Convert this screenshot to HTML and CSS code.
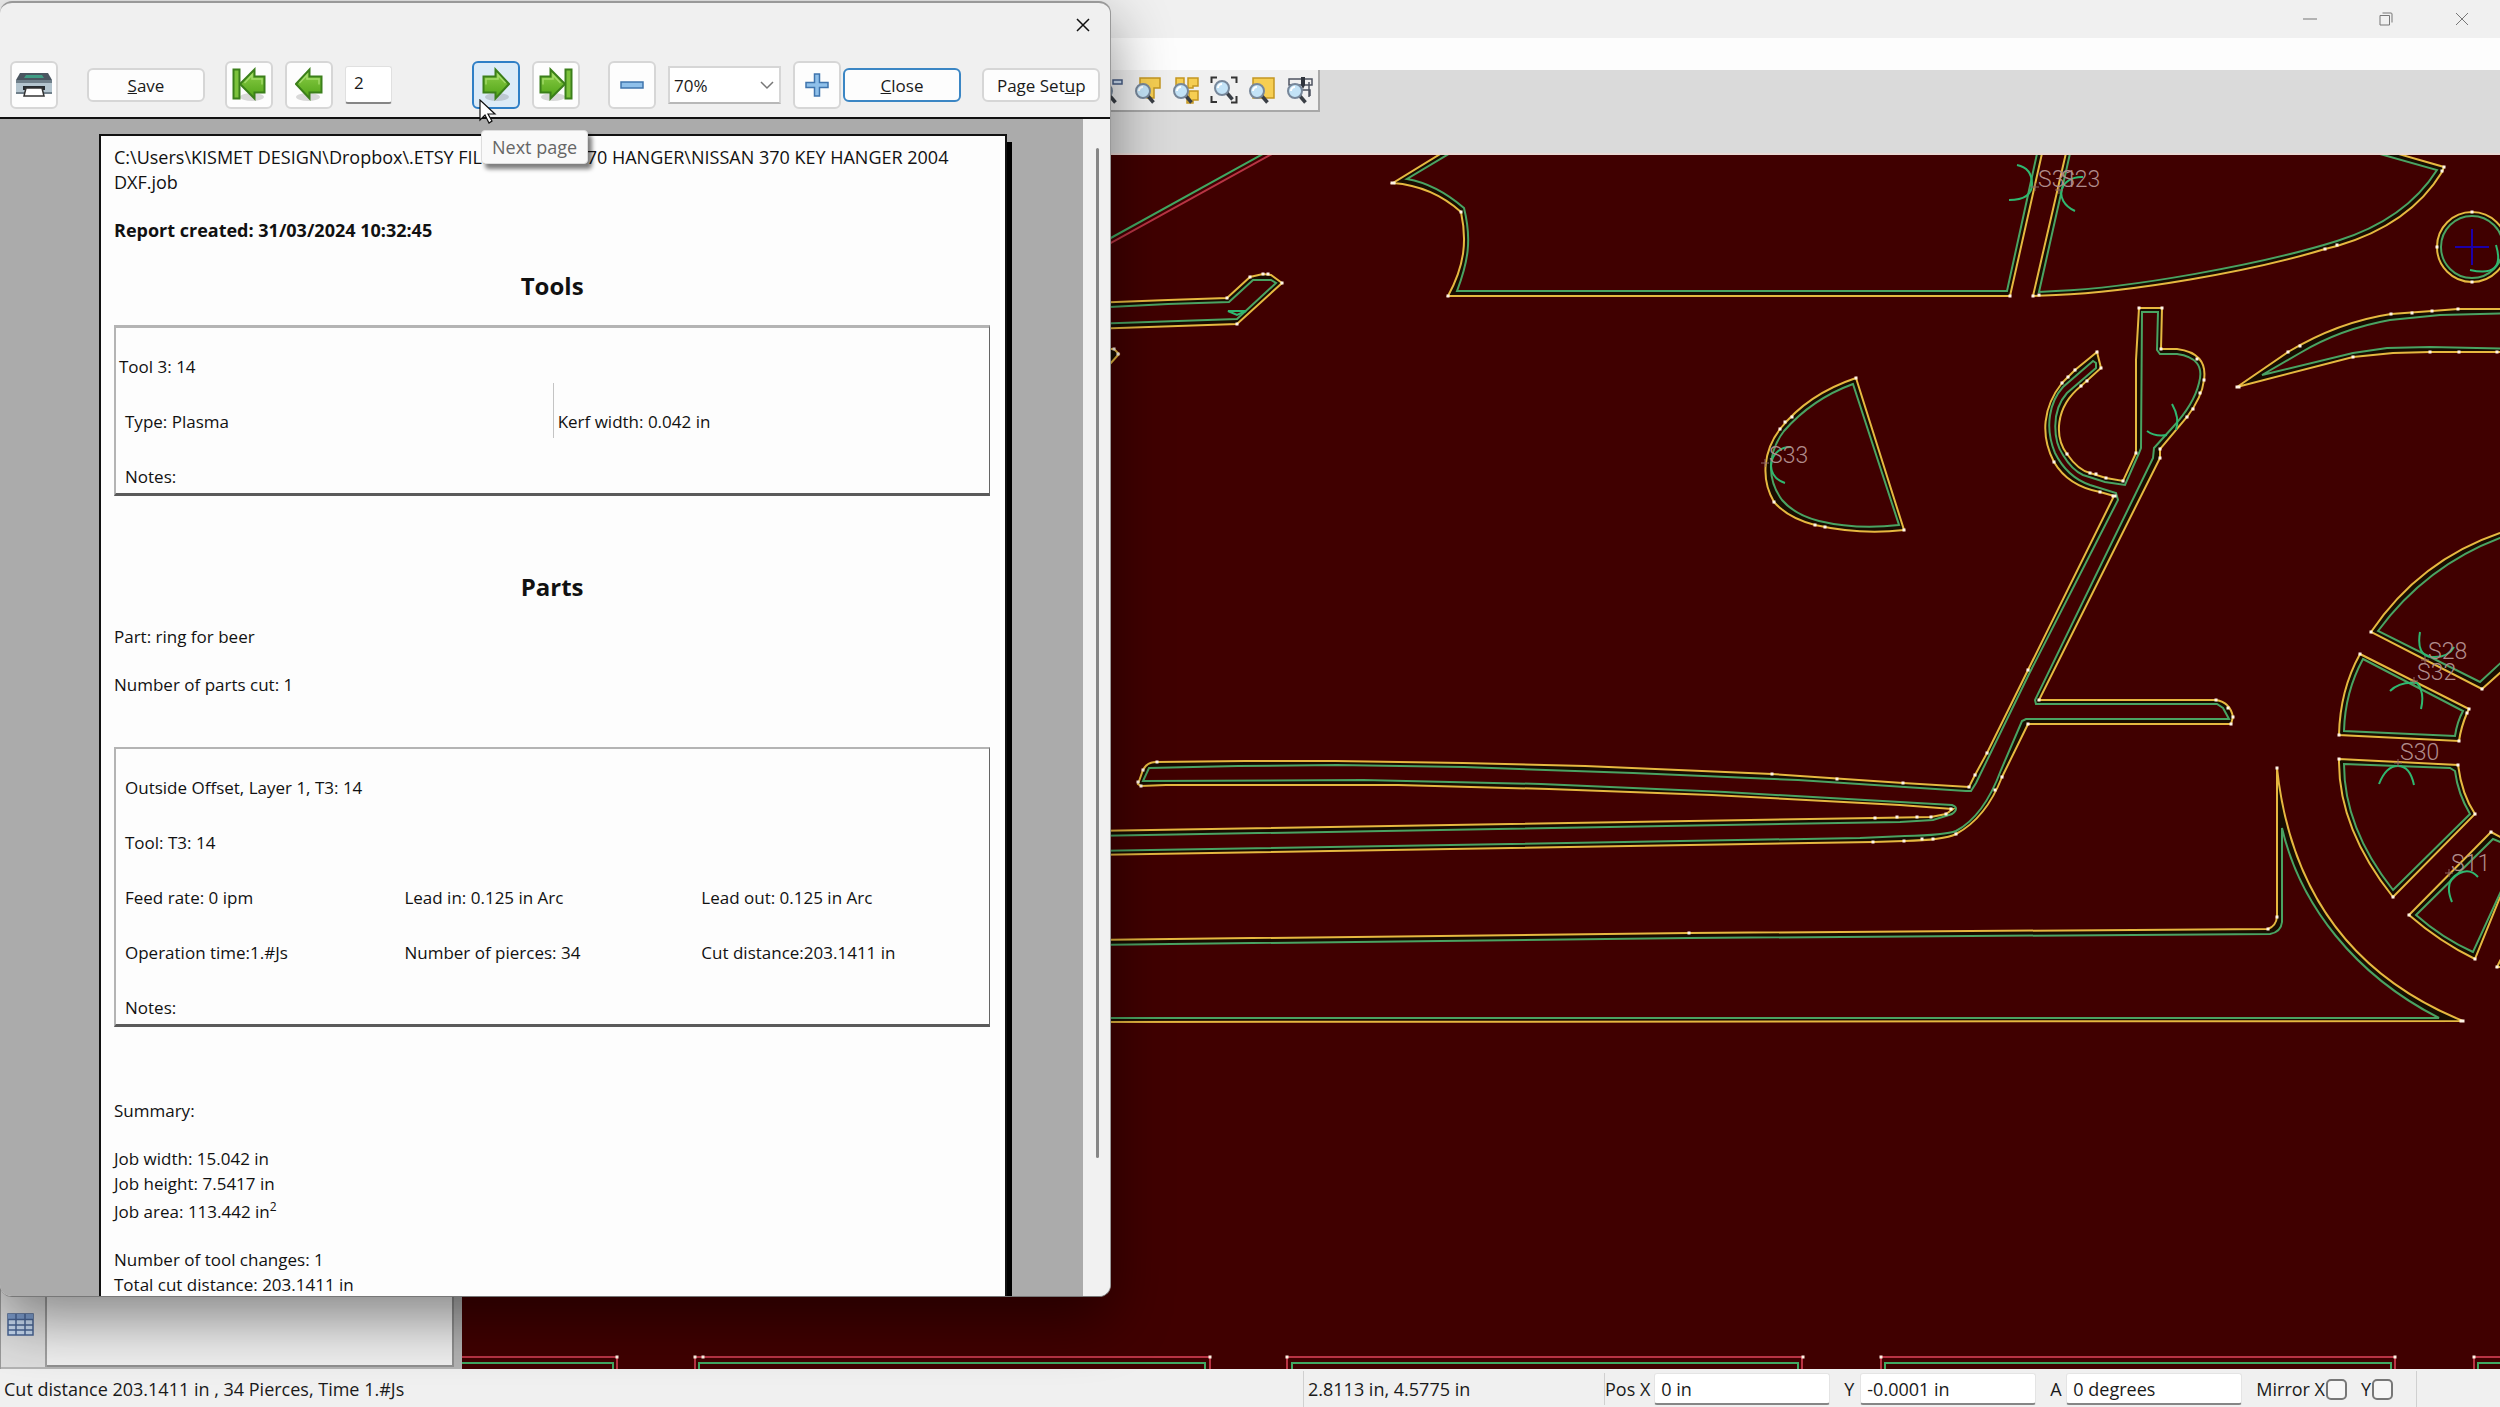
FILE: index.html
```html
<!DOCTYPE html>
<html lang="en">

<head>
    <meta charset="UTF-8">
    <title>Job report</title>
    <link rel="stylesheet" href="styles.css">
</head>

<body>

<!-- shared icon shapes -->
<svg class="defs" width="0" height="0" aria-hidden="true">
    <defs>
        <linearGradient id="green" x1="0" y1="0" x2="0" y2="1">
            <stop offset="0" stop-color="#8fd04a"/>
            <stop offset="1" stop-color="#4fa316"/>
        </linearGradient>
        <symbol id="arrow" viewBox="0 0 28 36">
            <ellipse cx="15" cy="30" rx="12" ry="4" fill="#000" opacity=".14"/>
            <path d="M1.500 9.500H13.500V2.500L27 17 13.500 31.500V25.500H1.500z" fill="url(#green)" stroke="#3b7f1a" stroke-width="2"/>
            <path d="M4 17.500V12H16V8l7.500 8" fill="none" stroke="#b4e57c" stroke-width="1.500" opacity=".7"/>
        </symbol>
        <symbol id="arrow-end" viewBox="0 0 34 36">
            <ellipse cx="14" cy="30" rx="12" ry="4" fill="#000" opacity=".14"/>
            <path d="M1.500 9.500H11.500V2.500L26 17 11.500 31.500V25.500H1.500z" fill="url(#green)" stroke="#3b7f1a" stroke-width="2"/>
            <path d="M26.500 2.500h6v29h-6z" fill="#7cc23c" stroke="#3b7f1a" stroke-width="2"/>
            <path d="M4 17.500V12H14V8l7.500 8" fill="none" stroke="#b4e57c" stroke-width="1.500" opacity=".7"/>
        </symbol>
        <symbol id="lens" viewBox="0 0 28 28">
            <path d="M13.500 19.500l6 7" stroke="#3a3f46" stroke-width="3.500"/>
            <circle cx="9" cy="15" r="7" fill="#c3e3f7" stroke="#77879a" stroke-width="2"/>
            <path d="M5 15a4 4 0 0 1 4-4" fill="none" stroke="#fff" stroke-width="2"/>
        </symbol>
    </defs>
</svg>

<div class="app">
    <header class="titlebar">
        <button class="win-btn" aria-label="Minimize"><svg width="14" height="14" viewBox="0 0 14 14"><path d="M0 7h14"/></svg></button>
        <button class="win-btn" aria-label="Restore"><svg width="14" height="14" viewBox="0 0 14 14"><path d="M1 3.500h9.500v9.500H1zM3.500 1H12q1 0 1 1v8.500"/></svg></button>
        <button class="win-btn" aria-label="Close window"><svg width="14" height="14" viewBox="0 0 14 14"><path d="M1 1l12 12M13 1L1 13"/></svg></button>
    </header>
    <div class="menubar"></div>

    <div class="toolbar-area">
        <div class="view-tools">
            <button class="view-btn" aria-label="Zoom out"><svg width="28" height="28"><use href="#lens" width="28" height="28"/><path d="M17 4h9v4h-9z" fill="#cfe0f5" stroke="#4a5f86" stroke-width="1.500"/></svg></button>
            <button class="view-btn" aria-label="Zoom part"><svg width="28" height="28"><path d="M6 2h20v10h-6v10h-7V12H6z" fill="#f6ce52" stroke="#c39722" stroke-width="1.500"/><use href="#lens" width="28" height="28"/></svg></button>
            <button class="view-btn" aria-label="Zoom all parts"><svg width="28" height="28"><path d="M4 2h8v9H4zM16 2h10v8h-5v2h-5zM17 15h9v9h-5v3h-6v-6h2z" fill="#f6ce52" stroke="#c39722" stroke-width="1.500"/><use href="#lens" width="28" height="28"/></svg></button>
            <button class="view-btn" aria-label="Zoom extents"><svg width="28" height="28"><path d="M1.500 7V1.500H7M21 1.500h5.500V7M1.500 20v6H7M21 26.500h5.500V20" fill="none" stroke="#333" stroke-width="2"/><use href="#lens" x="3" y="-3" width="28" height="28"/></svg></button>
            <button class="view-btn" aria-label="Zoom material"><svg width="28" height="28"><path d="M5 2h21v20H5z" fill="#f6ce52" stroke="#c39722" stroke-width="1.500"/><use href="#lens" width="28" height="28"/></svg></button>
            <button class="view-btn" aria-label="Zoom machine"><svg width="28" height="28"><path d="M3 3h23v6H3zM6 9v13M23 6v15M10 14h14v6" fill="none" stroke="#4d5360" stroke-width="1.500"/><path d="M15 1h4v8l-2 4-2-4z" fill="#30343c"/><use href="#lens" width="28" height="28"/></svg></button>
        </div>
    </div>

    <main class="workspace">
        <aside class="side">
            <div class="side-tabs">
                <svg class="grid-icon" width="27" height="23" viewBox="0 0 27 23">
                    <path d="M1 1h25v21H1z" fill="#c9dcf3" stroke="#4a6595" stroke-width="1.500"/>
                    <path d="M1 1h25v5H1z" fill="#7f9fd0"/>
                    <path d="M1 6.500h25M1 12h25M1 17h25M9 1v21M18 1v21" stroke="#4a6595" stroke-width="1.500"/>
                </svg>
            </div>
            <div class="side-panel"></div>
        </aside>

        <section class="canvas">
            <svg class="drawing" viewBox="462 155 2038 1214" preserveAspectRatio="xMinYMin slice">
                <!-- sheet outline -->
                <path class="red" d="M1080 260L1290 144"/>
                <path class="green" d="M1080 255L1281 144"/>

                <!-- small arm -->
                <path class="part" d="M1090 303L1168 300 1227 298 1250 277 1263 274 1271 275 1282 283 1237 324 1090 329z"/>
                <path class="path" d="M1090 308L1168 304 1229 302 1253 280 1271 280 1276 283 1237 319 1090 324z"/>
                <path class="lead" d="M1228 311h18l-9 4z"/>
                <path class="part" d="M1090 349h24l5 5-9 10h-20z"/>

                <!-- window panels -->
                <path class="part" d="M1463 140L1393 183Q1432 186 1461 212C1467 240 1465 265 1448 296H2010L2045 140z"/>
                <path class="path" d="M1472 140L1407 179Q1436 184 1464 208C1472 240 1468 262 1457 291H2007L2040 140z"/>
                <path class="part" d="M2069 140L2033 296 2056 295C2130 292 2250 272 2325 249L2337 246C2385 232 2420 208 2442 172L2444 167 2350 140z"/>
                <path class="path" d="M2073 140L2039 292 2056 291C2130 288 2260 265 2337 241C2385 226 2418 200 2437 170L2330 140z"/>
                <path class="lead" d="M2017 165Q2032 168 2032 184T2009 200M2083 177C2060 176 2052 200 2075 211"/>

                <!-- headrest -->
                <path class="part" d="M1856 378L1904 530Q1860 535 1815 525 1788 518 1774 502C1760 478 1764 450 1780 429Q1808 394 1856 378z"/>
                <path class="path" d="M1853 384L1899 525Q1857 530 1819 521 1795 515 1782 500C1766 478 1768 452 1784 431Q1812 399 1853 384z"/>
                <path class="lead" d="M1791 447C1770 446 1762 476 1785 483"/>

                <!-- long rail, rod and hook -->
                <path class="part" d="M1090 831L1874 818 1931 817 1946 814 1953 809 1900 805 1712 795 1549 789 1398 785 1166 785 1141 786 1138 784 1143 770Q1147 762 1156 762L1245 761 1335 761 1463 763 1585 766 1772 774 1903 783 1969 787 1975 775 1987 753 2028 670 2114 496 2100 492Q2068 486 2054 462C2040 435 2043 407 2062 383L2075 370 2097 352 2101 368 2081 386C2054 408 2055 438 2067 454Q2078 470 2090 473L2106 478 2123 481 2136 453 2136 360 2139 308H2162L2161 349H2177Q2208 353 2204 380 2202 397 2187 417L2160 449V458L2039 700H2216Q2230 702 2233 717L2231 724H2028L2002 777Q1986 818 1956 834 1944 840 1904 841L1873 842 1090 855z"/>
                <path class="path" d="M1090 836L1900 822 1933 820 1952 814Q1960 808 1952 805L1900 802 1725 792 1541 784 1363 780 1143 781 1149 768 1238 766 1337 765 1464 767 1633 773 1798 780 1966 791H1971L1976 783 2029 674 2118 500 2116 493 2090 485Q2067 477 2055 453C2044 427 2050 401 2063 387L2093 361 2096 363V368L2067 393C2050 412 2054 442 2063 455Q2072 470 2083 475L2105 482 2125 485 2139 453 2141 448 2142 312H2158L2157 350 2160 354H2177Q2206 358 2199 383 2194 404 2173 427L2154 448 2153 458 2035 700 2036 704H2217L2223 708 2229 719H2026L2022 721 2001 770Q1984 816 1956 831 1946 835 1905 836L1860 838 1090 851z"/>
                <path class="lead" d="M2172 404Q2180 418 2176 430M2147 431Q2155 437 2167 435"/>

                <!-- spoiler -->
                <path class="part" d="M2237 387L2288 352Q2338 322 2391 314L2432 311 2458 309H2520V352H2430L2393 353 2353 357z"/>
                <path class="path" d="M2262 375L2300 353Q2340 329 2390 320L2440 315 2520 313V349L2430 347 2387 348 2353 353z"/>
                <circle class="part" cx="2472" cy="247" r="35"/>
                <circle class="path" cx="2472" cy="247" r="31"/>
                <path class="blue" d="M2455 247h34M2472 229v36"/>
                <path class="lead" d="M2496 245Q2506 278 2470 270"/>

                <!-- body -->
                <path class="part" d="M1090 940L1689 933 2268 929Q2276 926 2277 917V768C2290 890 2350 975 2463 1021L1090 1022z"/>
                <path class="path" d="M1090 945L1689 938 2270 934Q2281 932 2282 922V828C2300 905 2355 975 2439 1018H1090z"/>

                <!-- wheel -->
                <path class="part" d="M2520 525L2500 533Q2420 560 2371 632L2482 689 2520 655z"/>
                <path class="path" d="M2520 531L2500 538Q2426 566 2378 631L2480 682 2520 645z"/>
                <path class="part" d="M2360 654L2469 709 2467 713Q2461 727 2459 741L2339 735Q2340 690 2360 654z"/>
                <path class="path" d="M2363 659L2463 711Q2457 722 2455 736L2344 731Q2345 692 2363 659z"/>
                <path class="part" d="M2339 759L2458 765Q2462 795 2475 814L2393 897Q2338 828 2339 759z"/>
                <path class="path" d="M2344 764L2450 768 2455 771Q2458 794 2470 814L2393 890Q2344 828 2344 764z"/>
                <path class="part" d="M2491 832L2520 848 2475 959Q2440 942 2409 915z"/>
                <path class="path" d="M2493 839L2520 850 2473 952Q2442 938 2416 915z"/>
                <path class="part" d="M2497 967l10-20v20z"/>
                <path class="lead" d="M2420 632Q2416 656 2432 657T2454 647M2390 691Q2400 681 2417 683 2425 692 2421 709M2379 784Q2386 766 2398 766T2414 785M2452 902Q2443 880 2460 873 2470 868 2478 877"/>

                <!-- second sheet row -->
                <path class="red" d="M440 1357H617V1380M695 1380V1357H1210V1380M1287 1380V1357H1802V1380M1881 1380V1357H2395V1380M2474 1380V1357H2520"/>
                <path class="green" d="M440 1363H613V1380M699 1380V1363H1205V1380M1292 1380V1363H1798V1380M1885 1380V1363H2391V1380M2478 1380V1363H2520"/>

                <!-- nodes -->
                <path class="node" d="M1227 298h0M1250 277h0M1263 274h0M1268 274h0M1282 283h0M1237 324h0M1114 349h0M1118 354h0M1392 183h2M1461 212h0M1448 296h0M2010 296h0M2033 296h0M2039 295h0M2325 249h0M2337 245h0M2442 171h0M2444 167h0
                M1856 378h0M1904 530h0M1774 502h0M1815 525h0M1825 527h0M1780 429h0M1785 422h0M1792 417h0M2097 352h0M2101 368h0M2087 381h0M2081 386h0M2075 370h0M2068 377h0M2062 383h0M2067 454h0M2090 473h0M2096 474h0M2106 478h0M2123 481h0M2054 462h0M2100 492h0M2113 496h2
                M2136 453h0M2139 308h0M2162 308h0M2161 349h0M2197 359h0M2204 380h0M2200 393h0M2193 409h0M2187 417h0M2160 449h0M2160 458h0M2237 387h2M2288 352h0M2300 346h0M2391 314h0M2412 313h0M2432 311h0M2458 309h0M2353 357h0M2430 352h0M2459 352h0M2497 352h0M2472 212h0M2472 282h0M2437 247h0
                M2028 670h0M1987 753h0M1975 775h0M1969 787h0M1903 783h0M1837 779h0M1772 774h0M1157 762h0M1143 770h0M1138 782h0M1141 786h0M1951 809h0M1946 814h0M1931 817h0M1917 817h0M1897 817h0M1875 818h0M1873 842h0M1904 841h0M1922 839h0M1933 839h0M1956 834h0M1995 790h0M2002 777h0M2028 724h0M2039 700h0M2216 700h0M2228 708h0M2233 717h0M2231 724h0
                M1689 933h0M2268 929h0M2277 917h0M2277 768h0M2461 1021h2M2371 632h0M2482 689h0M2360 654h0M2469 709h0M2467 713h0M2459 741h0M2339 735h0M2339 759h0M2458 765h0M2475 814h0M2393 897h0M2409 915h0M2475 959h0M2491 832h0M2497 967h0
                M617 1357h0M695 1357h0M703 1357h0M1210 1357h0M1287 1357h0M1803 1357h0M1881 1357h0M2395 1357h0M2474 1357h0"/>

                <!-- start points -->
                <path class="mark" d="M2031 187h8M2035 183v8M2055 190h8M2059 186v8M1761 463h8M1765 459v8M2421 660h8M2425 656v8M2410 681h8M2414 677v8M2394 763h8M2398 759v8M2445 873h8M2449 869v8"/>
                <g class="labels">
                    <text x="2038" y="187">S31</text>
                    <text x="2061" y="187">S23</text>
                    <text x="1769" y="463">S33</text>
                    <text x="2428" y="659">S28</text>
                    <text x="2417" y="680">S32</text>
                    <text x="2400" y="760">S30</text>
                    <text x="2451" y="871">S11</text>
                </g>
            </svg>
        </section>
    </main>

    <footer class="statusbar">
        <span class="status-text">Cut distance 203.1411 in , 34 Pierces, Time 1.#Js</span>
        <span class="status-coords">2.8113 in, 4.5775 in</span>
        <div class="status-form">
            <label for="posx">Pos X</label><input id="posx" class="field" type="text" value="0 in">
            <label for="posy">Y</label><input id="posy" class="field" type="text" value="-0.0001 in">
            <label for="angle">A</label><input id="angle" class="field" type="text" value="0 degrees">
            <div class="mirror">
                <label for="mx">Mirror X</label><input id="mx" class="tick" type="checkbox">
            </div>
            <div class="mirror">
                <label for="my">Y</label><input id="my" class="tick" type="checkbox">
            </div>
        </div>
        <span class="status-end"></span>
    </footer>
</div>

<!-- print preview window -->
<div class="dialog" role="dialog" aria-label="Print preview">
    <div class="dialog-title">
        <button class="dialog-x" aria-label="Close preview"><svg width="14" height="14" viewBox="0 0 14 14"><path d="M1 1l12 12M13 1L1 13" stroke="#111" stroke-width="1.500"/></svg></button>
    </div>

    <div class="preview-bar">
        <button class="btn icon" aria-label="Print">
            <svg width="38" height="26" viewBox="0 0 38 26">
                <path d="M5 1h28l4 7H1z" fill="#4a5560"/>
                <path d="M11 3h16l2 3H9z" fill="#3f9c84"/>
                <path d="M1 8h36v13H1z" fill="#b4c5cf"/>
                <path d="M1 8h36v3H1zM1 20h36v2H1z" fill="#6f7f8a"/>
                <path d="M8 14h22v4H8z" fill="#262b30"/>
                <path d="M11 16h16l2 8H9z" fill="#fff" stroke="#333" stroke-width="1.500"/>
            </svg>
        </button>
        <button class="btn text save"><span><u>S</u>ave</span></button>
        <div class="pager">
            <button class="btn icon" aria-label="First page"><svg class="flip" width="34" height="36"><use href="#arrow-end"/></svg></button>
            <button class="btn icon" aria-label="Previous page"><svg class="flip" width="28" height="36"><use href="#arrow"/></svg></button>
            <input class="page-no" type="text" value="2" aria-label="Page number">
        </div>
        <div class="pager next">
            <div class="tip-anchor">
                <button class="btn icon hot" aria-label="Next page"><svg width="28" height="36"><use href="#arrow"/></svg></button>
                <svg class="cursor" width="18" height="26" viewBox="0 0 18 26"><path d="M1 1v20l5-5 4 8 3-2-4-7h7z" fill="#fff" stroke="#111" stroke-width="1.200"/></svg>
                <span class="tooltip">Next page</span>
            </div>
            <button class="btn icon" aria-label="Last page"><svg width="34" height="36"><use href="#arrow-end"/></svg></button>
        </div>
        <div class="pager zoom">
            <button class="btn icon" aria-label="Zoom out"><svg width="24" height="24" viewBox="0 0 24 24"><path d="M1 9h22v6H1z" fill="#8fc0ea" stroke="#3f74ad" stroke-width="1.500"/></svg></button>
            <div class="combo">
                <select aria-label="Zoom level"><option>70%</option></select>
                <svg width="14" height="9" viewBox="0 0 14 9"><path d="M1 1l6 6 6-6" fill="none" stroke="#777" stroke-width="1.500"/></svg>
            </div>
            <button class="btn icon" aria-label="Zoom in"><svg width="24" height="24" viewBox="0 0 24 24"><path d="M9.500 1h5v8.500H23v5h-8.500V23h-5v-8.500H1v-5h8.500z" fill="#8fc0ea" stroke="#3f74ad" stroke-width="1.500"/></svg></button>
        </div>
        <button class="btn text default"><span><u>C</u>lose</span></button>
        <button class="btn text setup"><span>Page Set<u>u</u>p</span></button>
    </div>

    <div class="preview">
        <div class="sheet-area">
            <article class="sheet">
                <p class="job-file">C:\Users\KISMET DESIGN\Dropbox\.ETSY FILES\NISSAN 370 HANGER\NISSAN 370 KEY HANGER 2004<br>DXF.job</p>
                <p class="created">Report created: 31/03/2024 10:32:45</p>

                <h2>Tools</h2>
                <table class="box tools">
                    <tr><td colspan="2" class="tool-name">Tool 3: 14</td></tr>
                    <tr><td>Type: Plasma</td><td class="kerf">Kerf width: 0.042 in</td></tr>
                    <tr><td colspan="2">Notes:</td></tr>
                </table>

                <h2 class="parts-title">Parts</h2>
                <p>Part: ring for beer</p>
                <p>Number of parts cut: 1</p>

                <table class="box parts">
                    <colgroup><col class="c1"><col class="c2"><col></colgroup>
                    <tr><td colspan="3">Outside Offset, Layer 1, T3: 14</td></tr>
                    <tr><td colspan="3">Tool: T3: 14</td></tr>
                    <tr><td>Feed rate: 0 ipm</td><td>Lead in: 0.125 in Arc</td><td>Lead out: 0.125 in Arc</td></tr>
                    <tr><td>Operation time:1.#Js</td><td>Number of pierces: 34</td><td>Cut distance:203.1411 in</td></tr>
                    <tr><td colspan="3">Notes:</td></tr>
                </table>

                <p class="summary">Summary:</p>
                <p>Job width: 15.042 in<br>Job height: 7.5417 in</p>
                <p class="area">Job area: 113.442 in<sup>2</sup></p>
                <p>Number of tool changes: 1<br>Total cut distance: 203.1411 in</p>
            </article>
        </div>
        <div class="scrollbar"><div class="thumb"></div></div>
    </div>
</div>

</body>
</html>
```
FILE: styles.css
```css
* {
    box-sizing: border-box;
}

body {
    margin: 0;
    font-family: "Open Sans", "Noto Sans", sans-serif;
    font-size: 17px;
    color: #1a1a1a;
    overflow: hidden;
}

button, input, select {
    font: inherit;
    color: inherit;
}

.defs {
    position: absolute;
}

/* main window */
.app {
    display: flex;
    flex-direction: column;
    height: 100vh;
    background: #f0f0f0;
}

.titlebar {
    display: flex;
    justify-content: flex-end;
    height: 38px;
}

.win-btn {
    width: 76px;
    padding: 0;
    border: 0;
    background: none;
}

.win-btn path {
    fill: none;
    stroke: #777;
    stroke-width: 1;
}

.menubar {
    height: 32px;
    background: #fdfdfd;
}

.toolbar-area {
    height: 85px;
    background: #dadada;
    border-bottom: 2px solid #e8d8d4;
}

.view-tools {
    display: flex;
    justify-content: flex-end;
    gap: 10px;
    width: 52.8%;
    height: 42px;
    padding: 6px 4px 0 0;
    background: #f0f0f0;
    border-right: 2px solid #a8a8a8;
    border-bottom: 2px solid #a8a8a8;
}

.view-btn {
    width: 28px;
    height: 28px;
    padding: 0;
    border: 0;
    background: none;
}

.workspace {
    display: flex;
    flex: 1;
    min-height: 0;
}

.side {
    display: flex;
    width: 462px;
    padding: 0 8px 2px 0;
    background: #b4b4b4;
    border-left: 1px solid #999;
}

.side-tabs {
    display: flex;
    align-items: flex-end;
    width: 46px;
    padding: 0 0 31px 6px;
    background: #dedede;
    border-right: 2px solid #a0a0a0;
}

.side-panel {
    flex: 1;
    background: #f0f0f0;
    border-right: 2px solid #909090;
    border-bottom: 2px solid #909090;
}

.canvas {
    position: relative;
    flex: 1;
    background: #400000;
}

/* drawing */
.drawing {
    position: absolute;
    width: 100%;
    height: 100%;
}

.drawing path, .drawing circle {
    stroke-width: 2;
}

.drawing .part {
    fill: #180c00;
    stroke: #e6b840;
}

.drawing .path {
    fill: #400000;
    stroke: #4aa362;
}

.drawing .red {
    fill: none;
    stroke: #b83444;
}

.drawing .green {
    fill: none;
    stroke: #40a862;
}

.drawing .lead {
    fill: none;
    stroke: #2fb870;
}

.drawing .blue {
    stroke: #1c00a8;
}

.drawing .mark {
    stroke: #8c6464;
    stroke-width: 1;
}

.drawing .node {
    fill: none;
    stroke: #fff4e6;
    stroke-width: 3;
    stroke-linecap: square;
}

.labels {
    font-family: Roboto, sans-serif;
    font-size: 23px;
    font-weight: 300;
    fill: #b08c8c;
}

/* status bar */
.statusbar {
    display: flex;
    align-items: center;
    height: 38px;
    padding-top: 2px;
    font-size: 18px;
    background: #f0f0f0;
    white-space: nowrap;
}

.status-text {
    flex: 1;
    padding-left: 4px;
}

.status-coords, .status-end {
    height: 36px;
    line-height: 36px;
    border-left: 1px solid #d0d0d0;
}

.status-coords {
    width: 301px;
    padding-left: 4px;
}

.status-form {
    display: flex;
    align-items: center;
    width: 812px;
    border-left: 1px solid #d0d0d0;
}

.status-form > label {
    min-width: 12px;
    margin-right: 4px;
}

.field {
    width: 176px;
    height: 32px;
    margin-right: 14px;
    padding: 0 6px;
    border: 1px solid #e4e4e4;
    border-bottom: 2px solid #868686;
    border-radius: 3px;
    background: #fff;
}

.mirror {
    display: flex;
    align-items: center;
    margin-right: 14px;
}

.tick {
    appearance: none;
    width: 21px;
    height: 21px;
    margin: 0 0 0 1px;
    border: 2px solid #777;
    border-radius: 5px;
    background: #f6f6f6;
}

.status-end {
    width: 84px;
}

/* preview window */
.dialog {
    position: absolute;
    left: 0;
    top: 1px;
    display: flex;
    flex-direction: column;
    width: 44.45%;
    height: 92.1vh;
    background: #f0f0f0;
    border-top: 2px solid #999;
    border-right: 1px solid #999;
    border-bottom: 1px solid #777;
    border-radius: 12px;
    overflow: hidden;
    box-shadow: 0 22px 60px rgba(0, 0, 0, .45);
}

.dialog-title {
    display: flex;
    justify-content: flex-end;
    height: 58px;
}

.dialog-x {
    width: 54px;
    height: 44px;
    padding: 0;
    border: 0;
    background: none;
}

.preview-bar {
    display: flex;
    align-items: center;
    height: 58px;
    padding: 0 10px 8px;
    border-bottom: 2px solid #111;
}

.btn {
    display: flex;
    align-items: center;
    justify-content: center;
    flex: none;
    padding: 0;
    border: 2px solid #d6d6d6;
    border-radius: 6px;
    background: #fdfdfd;
}

.btn.icon {
    width: 48px;
    height: 48px;
}

.btn.text {
    width: 118px;
    height: 34px;
}

.btn.hot {
    border-color: #2f7fc6;
    background: #dcebf7;
}

.btn.default {
    margin-left: 2px;
    border-color: #3b86c4;
}

.save {
    margin-left: 29px;
}

.setup {
    margin-left: auto;
}

.flip {
    transform: scaleX(-1);
}

.pager {
    display: flex;
    align-items: center;
    gap: 12px;
    margin-left: 20px;
}

.pager.next {
    margin-left: 80px;
}

.pager.zoom {
    margin-left: 28px;
}

.page-no {
    width: 47px;
    height: 38px;
    padding: 0 8px 4px;
    border: 1px solid #e0e0e0;
    border-bottom: 2px solid #868686;
    border-radius: 3px;
    background: #fff;
}

.combo {
    position: relative;
    display: flex;
}

.combo select {
    appearance: none;
    width: 113px;
    height: 38px;
    padding: 0 4px;
    border: 2px solid #d6d6d6;
    border-bottom-color: #b8b8b8;
    background: #fff;
}

.combo svg {
    position: absolute;
    right: 7px;
    top: 15px;
}

.tip-anchor {
    position: relative;
}

.cursor {
    position: absolute;
    left: 7px;
    top: 38px;
    z-index: 3;
}

.tooltip {
    position: absolute;
    left: 9px;
    top: 69px;
    z-index: 2;
    padding: 0 10px;
    font-size: 18px;
    line-height: 32px;
    white-space: nowrap;
    color: #666;
    background: #f9f9f9;
    border: 1px solid #ddd;
    border-radius: 4px;
    box-shadow: 4px 5px 4px rgba(0, 0, 0, .5);
}

.preview {
    display: flex;
    flex: 1;
    min-height: 0;
}

.sheet-area {
    flex: 1;
    padding: 15px 76px 0 99px;
    background: #ababab;
    overflow: hidden;
}

.scrollbar {
    width: 27px;
    padding: 29px 11px 0 13px;
    background: #f1f1f1;
}

.thumb {
    height: 88%;
    background: #868686;
    border-radius: 2px;
}

/* report */
.sheet {
    min-height: 1200px;
    padding: 9px 15px 0 13px;
    line-height: 25px;
    color: #111;
    background: #fdfdfd;
    border: 2px solid #111;
    box-shadow: 5px 8px 0 #000;
    white-space: nowrap;
}

.sheet p {
    margin: 0 0 23px;
}

.sheet .job-file {
    font-size: 18px;
}

.sheet .created {
    margin-bottom: 26px;
    font-size: 18px;
    font-weight: bold;
}

.sheet h2 {
    margin: 0 0 23px;
    font-size: 24px;
    line-height: 33px;
    text-align: center;
}

.sheet .parts-title {
    margin: 74px 0 21px;
}

.box {
    width: 100%;
    border-spacing: 0;
    border: 2px solid #b4b4b4;
    border-right: 1px solid #666;
    border-bottom: 3px solid #5a5a5a;
    table-layout: fixed;
}

.box td {
    height: 55px;
    padding: 26px 0 4px 9px;
}

.box .tool-name {
    padding-left: 3px;
}

.box .kerf {
    padding-left: 4px;
    border-left: 1px solid #c4c4c4;
}

.tools {
    border-top-width: 3px;
}

.parts {
    margin-top: 50px;
}

.c1 {
    width: 32%;
}

.c2 {
    width: 34%;
}

.sheet .summary {
    margin-top: 71px;
}

.sheet .area {
    margin-top: -20px;
}

sup {
    font-size: 12px;
    line-height: 0;
}
```
